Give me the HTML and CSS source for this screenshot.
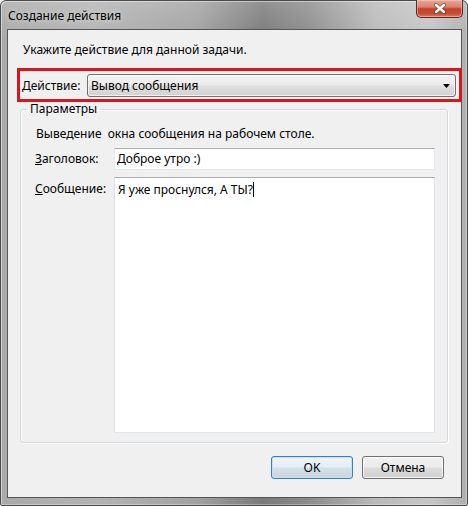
FILE: index.html
```html
<!DOCTYPE html>
<html lang="ru">
<head>
<meta charset="utf-8">
<title>Создание действия</title>
<link rel="stylesheet" href="styles.css">
</head>
<body>
<div class="window">
  <div class="titlebar">
    <span class="title">Создание действия</span>
    <div class="close">
      <svg width="14" height="11" viewBox="0 0 14 11">
        <path d="M3 2 L11 9 M11 2 L3 9" stroke="#4a2018" stroke-width="4" stroke-linecap="round" opacity="0.55"/>
        <path d="M3 2 L11 9 M11 2 L3 9" stroke="#ffffff" stroke-width="2.4" stroke-linecap="round"/>
      </svg>
    </div>
  </div>
  <div class="frame">
    <div class="client">
      <div class="instruction">Укажите действие для данной задачи.</div>
      <div class="action-row">
        <span class="label action-label"><u>Д</u>ействие:</span>
        <div class="combo">
          <span class="combo-text">Вывод сообщения</span>
          <svg class="combo-arrow" width="7" height="4" viewBox="0 0 7 4"><path d="M0 0 H7 L3.5 4 Z" fill="#000"/></svg>
        </div>
      </div>
      <div class="highlight"></div>
      <fieldset class="group">
        <legend class="group-title">Параметры</legend>
        <div class="desc">Выведение&nbsp; окна сообщения на рабочем столе.</div>
        <div class="field-row">
          <span class="label field-label"><u>З</u>аголовок:</span>
          <div class="textbox">Доброе утро :)</div>
        </div>
        <div class="field-row message-row">
          <span class="label field-label"><u>С</u>ообщение:</span>
          <div class="textbox textarea">Я уже проснулся, А ТЫ?<span class="caret"></span></div>
        </div>
      </fieldset>
      <div class="buttons">
        <div class="btn btn-default">OK</div>
        <div class="btn">Отмена</div>
      </div>
    </div>
  </div>
</div>
</body>
</html>
```

FILE: styles.css
```css
* { box-sizing: border-box; }

html, body {
  margin: 0;
  padding: 0;
  width: 468px;
  height: 506px;
  overflow: hidden;
  background: #ffffff;
}

body {
  font-family: "Noto Sans", "Open Sans", sans-serif;
  font-size: 12px;
  color: #000;
}

.window {
  width: 468px;
  height: 506px;
  display: flex;
  flex-direction: column;
  border: 1px solid #4b4b4b;
  border-radius: 6px 6px 2px 2px;
  background:
    linear-gradient(to bottom, rgba(255,255,255,0.18), rgba(255,255,255,0) 40px),
    linear-gradient(to right, #a9a9a9 0%, #b3b3b3 20%, #a2a2a2 42%, #7a7a7a 56%, #8c8c8c 66%, #b9b9b9 80%, #c6c6c6 92%, #b0b0b0 100%);
  box-shadow: inset 1px 1px 0 rgba(255,255,255,0.45), inset -1px -1px 0 rgba(255,255,255,0.3);
}

.titlebar {
  height: 28px;
  display: flex;
  justify-content: space-between;
  align-items: flex-start;
  flex: none;
}

.title {
  padding-left: 7px;
  line-height: 30px;
  color: #000;
  text-shadow: 0 0 6px rgba(255,255,255,0.7);
}

.close {
  width: 47px;
  height: 18px;
  margin-right: 4px;
  margin-top: -1px;
  display: flex;
  align-items: center;
  justify-content: center;
  border: 1px solid #5b2c22;
  border-top: none;
  border-radius: 0 0 5px 5px;
  background: linear-gradient(to bottom, #e7a696 0%, #d98470 40%, #c4432a 52%, #c24a30 78%, #dd7a61 100%);
  box-shadow: inset 0 0 0 1px rgba(255,220,210,0.45);
}

.frame {
  flex: 1;
  padding: 0 5px 7px 6px;
  display: flex;
}

.client {
  flex: 1;
  position: relative;
  background: #f0f0f0;
  border: 1px solid #555555;
  display: flex;
  flex-direction: column;
}

.instruction {
  margin: 12px 0 0 15px;
  line-height: 16px;
}

.action-row {
  margin-top: 16px;
  padding-left: 14px;
  display: flex;
  align-items: center;
  height: 23px;
}

.label { line-height: 16px; }

.action-label { width: 65px; flex: none; }

.combo {
  width: 369px;
  height: 23px;
  border: 1px solid #707070;
  border-radius: 3px;
  background: linear-gradient(to bottom, #f3f3f3 0%, #ececec 48%, #dedede 52%, #d2d2d2 100%);
  box-shadow: inset 0 0 0 1px rgba(255,255,255,0.7);
  display: flex;
  align-items: center;
  justify-content: space-between;
  padding: 0 5px 0 3px;
}

.combo-text { line-height: 16px; }

.combo-arrow { display: block; }

.highlight {
  position: absolute;
  left: 9px;
  top: 38px;
  width: 445px;
  height: 34px;
  border: 3px solid #d8161e;
  pointer-events: none;
}

.group {
  margin: 4px 0 0 12px;
  width: 428px;
  padding: 0 0 9px 0;
  border: 1px solid #d3d9dd;
  border-radius: 3px;
  box-shadow: inset 1px 1px 0 #ffffff, 1px 1px 0 #ffffff;
  min-width: 0;
}

.group-title {
  margin-left: 6px;
  padding: 0 3px;
  line-height: 16px;
}

.desc {
  margin: 9px 0 0 15px;
  line-height: 16px;
}

.field-row {
  display: flex;
  align-items: center;
  padding-left: 14px;
  margin-top: 6px;
}

.field-label { width: 79px; flex: none; }

.textbox {
  width: 321px;
  height: 22px;
  background: #ffffff;
  border: 1px solid #e2e8ee;
  border-top-color: #abadb3;
  padding: 2px 3px 0 2px;
  line-height: 16px;
}

.message-row {
  align-items: flex-start;
  margin-top: 7px;
}

.message-row .field-label { margin-top: 4px; }

.textarea {
  height: 256px;
  padding: 4px 3px 0 3px;
  border-left-color: #dbe1e7;
  border-right-color: #dbe1e7;
}

.caret {
  display: inline-block;
  width: 1px;
  height: 15px;
  background: #000;
  vertical-align: -3px;
}

.buttons {
  display: flex;
  justify-content: flex-end;
  gap: 9px;
  padding-right: 17px;
  margin-top: 13px;
}

.btn {
  width: 82px;
  height: 23px;
  border: 1px solid #707070;
  border-radius: 3px;
  background: linear-gradient(to bottom, #f2f2f2 0%, #ebebeb 48%, #dddddd 52%, #cfcfcf 100%);
  box-shadow: inset 0 0 0 1px rgba(255,255,255,0.75);
  display: flex;
  align-items: center;
  justify-content: center;
  line-height: 16px;
}

.btn-default {
  border-color: #3c7fb1;
  box-shadow: inset 0 0 0 1px #bfe3f7;
  background: linear-gradient(to bottom, #eef5f9 0%, #e6eef3 48%, #d5e0e7 52%, #c9d6de 100%);
}
```
